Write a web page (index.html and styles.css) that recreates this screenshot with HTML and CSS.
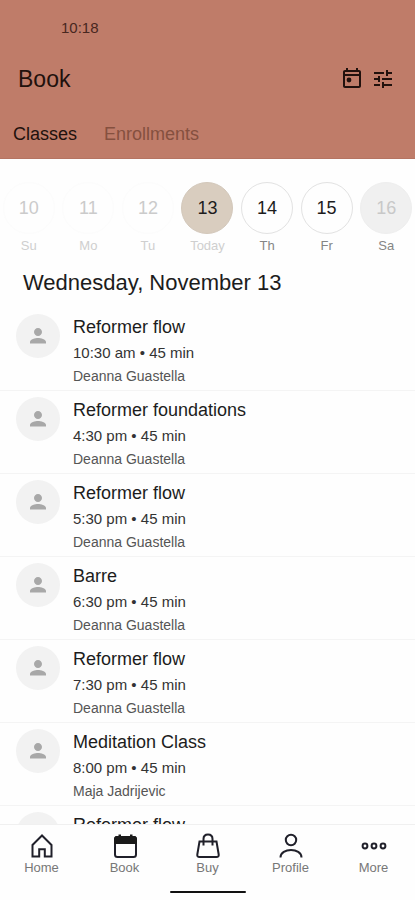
FILE: index.html
```html
<!DOCTYPE html>
<html lang="en">
<head>
<meta charset="utf-8">
<meta name="viewport" content="width=device-width, initial-scale=1">
<title>Book</title>
<link rel="stylesheet" href="styles.css">
</head>
<body>
<svg class="defs" aria-hidden="true">
  <symbol id="person" viewBox="0 0 24 24"><path d="M12 12c2.210 0 4-1.790 4-4s-1.790-4-4-4-4 1.790-4 4 1.790 4 4 4zm0 2c-2.670 0-8 1.340-8 4v1.500h16V18c0-2.660-5.330-4-8-4z"/></symbol>
</svg>
<header class="header">
  <div class="status"><time>10:18</time></div>
  <div class="toolbar">
    <h1 class="title">Book</h1>
    <div class="actions">
      <button class="icon-button" type="button" aria-label="Calendar">
        <svg viewBox="0 0 24 24" width="24" height="24"><path d="M19 3h-1V1h-2v2H8V1H6v2H5c-1.110 0-2 .9-2 2v14c0 1.100.89 2 2 2h14c1.100 0 2-.9 2-2V5c0-1.100-.9-2-2-2zm0 16H5V9h14v10zm0-12H5V5h14v2z"/><circle cx="9" cy="13" r="2.400"/></svg>
      </button>
      <button class="icon-button" type="button" aria-label="Filters">
        <svg viewBox="0 0 24 24" width="24" height="24"><path d="M3 17v2h6v-2H3zM3 5v2h10V5H3zm10 16v-2h8v-2h-8v-2h-2v6h2zM7 9v2H3v2h4v2h2V9H7zm14 4v-2H11v2h10zm-6-4h2V7h4V5h-4V3h-2v6z"/></svg>
      </button>
    </div>
  </div>
  <nav class="tabs" aria-label="Sections">
    <a class="tab tab-active" href="#classes">Classes</a>
    <a class="tab" href="#enrollments">Enrollments</a>
  </nav>
</header>
<main class="main" id="classes">
  <div class="days">
    <button class="day day-past" type="button" disabled><span class="num">10</span><span class="name">Su</span></button>
    <button class="day day-past" type="button" disabled><span class="num">11</span><span class="name">Mo</span></button>
    <button class="day day-past" type="button" disabled><span class="num">12</span><span class="name">Tu</span></button>
    <button class="day day-today" type="button"><span class="num">13</span><span class="name">Today</span></button>
    <button class="day" type="button"><span class="num">14</span><span class="name">Th</span></button>
    <button class="day" type="button"><span class="num">15</span><span class="name">Fr</span></button>
    <button class="day day-empty" type="button"><span class="num">16</span><span class="name">Sa</span></button>
  </div>
  <h2 class="date">Wednesday, November 13</h2>
  <ul class="classes">
    <li class="class">
      <span class="avatar"><svg width="24" height="24"><use href="#person"/></svg></span>
      <div><h3 class="class-name">Reformer flow</h3><p class="class-time">10:30 am • 45 min</p><p class="teacher">Deanna Guastella</p></div>
    </li>
    <li class="class">
      <span class="avatar"><svg width="24" height="24"><use href="#person"/></svg></span>
      <div><h3 class="class-name">Reformer foundations</h3><p class="class-time">4:30 pm • 45 min</p><p class="teacher">Deanna Guastella</p></div>
    </li>
    <li class="class">
      <span class="avatar"><svg width="24" height="24"><use href="#person"/></svg></span>
      <div><h3 class="class-name">Reformer flow</h3><p class="class-time">5:30 pm • 45 min</p><p class="teacher">Deanna Guastella</p></div>
    </li>
    <li class="class">
      <span class="avatar"><svg width="24" height="24"><use href="#person"/></svg></span>
      <div><h3 class="class-name">Barre</h3><p class="class-time">6:30 pm • 45 min</p><p class="teacher">Deanna Guastella</p></div>
    </li>
    <li class="class">
      <span class="avatar"><svg width="24" height="24"><use href="#person"/></svg></span>
      <div><h3 class="class-name">Reformer flow</h3><p class="class-time">7:30 pm • 45 min</p><p class="teacher">Deanna Guastella</p></div>
    </li>
    <li class="class">
      <span class="avatar"><svg width="24" height="24"><use href="#person"/></svg></span>
      <div><h3 class="class-name">Meditation Class</h3><p class="class-time">8:00 pm • 45 min</p><p class="teacher">Maja Jadrijevic</p></div>
    </li>
    <li class="class">
      <span class="avatar"><svg width="24" height="24"><use href="#person"/></svg></span>
      <div><h3 class="class-name">Reformer flow</h3></div>
    </li>
  </ul>
</main>
<footer class="footer">
  <nav class="nav" aria-label="Main">
    <a class="nav-item" href="#home">
      <svg viewBox="0 0 28 28" width="28" height="28"><path d="M14 3.500L4.500 13v11.500h6.700v-7.300h5.600v7.300h6.700V13z"/></svg>
      Home
    </a>
    <a class="nav-item" href="#book">
      <svg viewBox="0 0 28 28" width="28" height="28"><rect x="4" y="5" width="21" height="20" rx="2.500"/><path class="solid" d="M3 12V7.500Q3 4 5.500 4H7.500V2.500H10V4H19V2.500H21.500V4H23.500Q26 4 26 7.500V12z"/></svg>
      Book
    </a>
    <a class="nav-item" href="#buy">
      <svg viewBox="0 0 28 28" width="28" height="28"><path d="M5.500 9.500h17l2.200 13q.3 2.500-2.200 2.500h-17q-2.500 0-2.200-2.500zM9.500 13.500V7q0-4.500 4.500-4.500t4.500 4.500v6.500"/></svg>
      Buy
    </a>
    <a class="nav-item" href="#profile">
      <svg viewBox="0 0 28 28" width="28" height="28"><circle cx="14" cy="8" r="5.200"/><path d="M3.500 25.500c0-10 21-10 21 0"/></svg>
      Profile
    </a>
    <a class="nav-item" href="#more">
      <svg viewBox="0 0 28 28" width="28" height="28"><circle cx="5" cy="14" r="2.400"/><circle cx="14" cy="14" r="2.400"/><circle cx="23" cy="14" r="2.400"/></svg>
      More
    </a>
  </nav>
  <div class="home-bar"></div>
</footer>
</body>
</html>
```
FILE: styles.css
```css
* { box-sizing: border-box; margin: 0; padding: 0; }

body {
  display: flex;
  flex-direction: column;
  height: 100vh;
  overflow: hidden;
  background: #fefefe;
  color: #1c1c1c;
  font-family: "Liberation Sans", Arial, sans-serif;
}

button { border: 0; background: none; color: inherit; font: inherit; }
a { color: inherit; text-decoration: none; }
h1, h2, h3 { font-weight: 400; }
.defs { display: none; }

.header {
  flex: none;
  background: #bf7c69;
  border-bottom: 1px solid #b57462;
}
.status { padding: 18px 61px 0; font-size: 15px; line-height: 20px; color: #48271f; }
.toolbar {
  display: flex;
  align-items: center;
  justify-content: space-between;
  padding: 25px 20px 0 18px;
}
.title { font-size: 23px; line-height: 32px; color: #21110d; }
.actions { display: flex; gap: 7px; }
.icon-button { width: 24px; height: 24px; fill: #21110d; }
.icon-button svg { display: block; }
.tabs { display: flex; gap: 27px; padding: 28px 13px 13px; font-size: 18px; line-height: 22px; }
.tab { color: #85503f; }
.tab-active { color: #21110d; }

.main { flex: 1; min-height: 0; overflow: hidden; padding-top: 23px; }
.days { display: grid; grid-template-columns: repeat(7, 1fr); margin: 0 -1px; }
.day { display: flex; flex-direction: column; align-items: center; gap: 4px; }
.num {
  width: 52px;
  height: 52px;
  border: 1px solid #e2e2e2;
  border-radius: 50%;
  font-size: 18px;
  line-height: 50px;
}
.name { font-size: 13px; line-height: 16px; color: #858585; }
.day-past .num { border-color: #fcfcfc; color: #cbcbcb; }
.day-past .name, .day-today .name { color: #cfcfcf; }
.day-today .num { background: #d9cdbf; border-color: #d3c8bb; }
.day-empty .num { background: #f0f0f0; border-color: #eeeeee; color: #c8c8c8; }

.date { padding: 15px 23px 11px; font-size: 22px; line-height: 28px; }
.classes { list-style: none; }
.class {
  display: flex;
  gap: 13px;
  padding: 6px 16px 4px;
  border-bottom: 1px solid #f4f4f4;
}
.avatar {
  display: flex;
  flex: none;
  align-items: center;
  justify-content: center;
  width: 44px;
  height: 44px;
  border-radius: 50%;
  background: #f2f2f2;
  fill: #a8a8a8;
}
.class-name { font-size: 18px; line-height: 26px; }
.class-time { font-size: 15px; line-height: 26px; color: #333333; }
.teacher { font-size: 14px; line-height: 20px; color: #555555; }

.footer { flex: none; border-top: 1px solid #f0f0f0; background: #fefefe; }
.nav { display: grid; grid-template-columns: repeat(5, 1fr); padding-top: 7px; }
.nav-item {
  display: flex;
  flex-direction: column;
  align-items: center;
  font-size: 13px;
  line-height: 16px;
  color: #777777;
}
.nav-item svg { fill: none; stroke: #20202a; stroke-width: 2; }
.nav-item .solid { fill: #1a1a1a; stroke: none; }
.home-bar {
  width: 76px;
  height: 2px;
  margin: 15px auto 7px;
  border-radius: 1px;
  background: #111111;
}
```
